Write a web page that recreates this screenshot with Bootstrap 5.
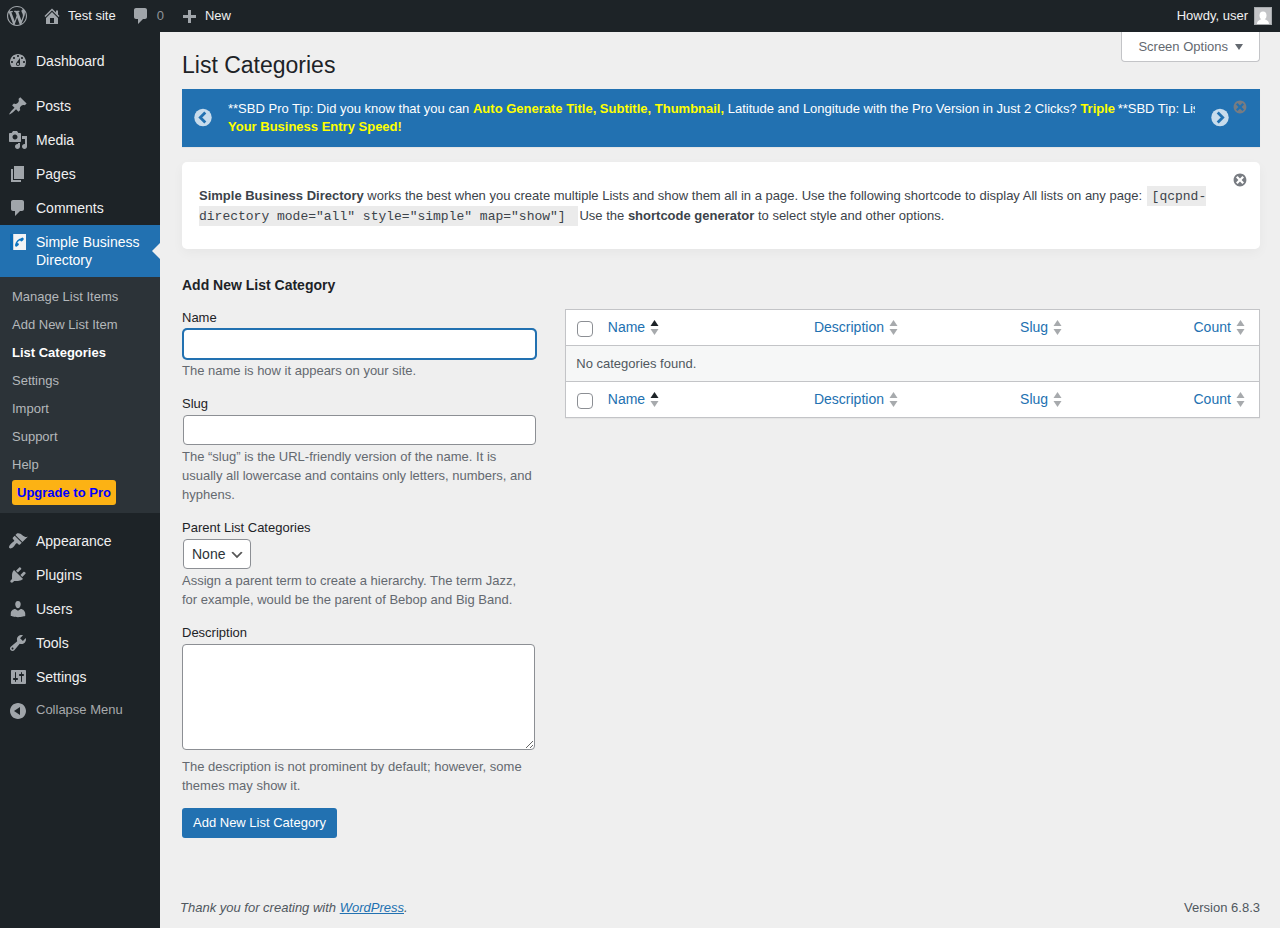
<!DOCTYPE html>
<html lang="en">
<head>
<meta charset="utf-8">
<meta name="viewport" content="width=device-width, initial-scale=1">
<title>List Categories ‹ Test site — WordPress</title>
<link href="https://cdn.jsdelivr.net/npm/bootstrap@5.3.0/dist/css/bootstrap.min.css" rel="stylesheet">
<style>
  :root { --page: #efefef; --ink: #1d2327; --blue: #2271b1; --line: #8c8f94; --icon: #a0a5aa; }
  body { font-family: "Liberation Sans", Arial, sans-serif; font-size: 13px; line-height: 19px; color: #3c434a; background: var(--page); }
  svg { display: block; flex: none; fill: currentColor; }
  .ico { width: 20px; height: 20px; color: var(--icon); }
  a { color: var(--blue); }

  /* Toolbar */
  .toolbar { height: 32px; background: var(--ink); }
  .toolbar a { color: #f0f0f1; text-decoration: none; gap: 6px; padding: 0 8px 0 7px; height: 32px; line-height: 18px; }
  .toolbar .quiet { color: #8f9499; }
  .avatar { width: 18px; height: 18px; border: 1px solid #a7aaad; background: #c3c4c7; color: #fff; }

  /* Side menu */
  .side { flex: 0 0 160px; background: var(--ink); padding-top: 12px; }
  .side-link { color: #f0f0f1; text-decoration: none; font-size: 14px; line-height: 18px; gap: 8px; padding: 8px; }
  .side-link .ico { margin: -1px 0; }
  .side-gap { height: 11px; }
  .side-link.current { position: relative; background: var(--blue); color: #fff; }
  .side-link.current::after { content: ""; position: absolute; right: 0; top: 50%; margin-top: -8px; border: 8px solid transparent; border-left-width: 0; border-right-color: var(--page); }
  .submenu { background: #2c3338; padding: 5px 12px 7px; }
  .submenu a { display: flex; align-items: center; height: 28px; color: #b4b8bb; text-decoration: none; }
  .submenu a.here { color: #fff; font-weight: 700; }
  .submenu .pro { background: #fcb214; color: #00f; font-weight: 700; border-radius: 3px; padding: 3px 5px; }
  .collapse-btn { border: 0; background: none; color: #a7aaad; gap: 8px; padding: 6px 8px; }

  /* Content */
  .content { min-width: 0; padding: 0 20px 11px; }
  .wrap-area { padding-left: 2px; }
  .screen-btn { border: 1px solid #c3c4c7; border-top: 0; border-radius: 0 0 4px 4px; background: #fff; color: #646970; height: 30px; padding: 0 16px; gap: 7px; }
  h1 { font-size: 23px; line-height: 30px; color: var(--ink); font-weight: 400; margin: 0 0 9px; padding-top: 18px; }
  .tips { background: var(--blue); color: #fff; line-height: 18px; padding: 11px 30px 11px 11px; gap: 15px; box-shadow: 0 1px 1px rgba(0,0,0,.04); }
  .tips b { color: #ff0; }
  .tips-view { min-width: 0; }
  .tip-slide { flex: 0 0 92%; }
  .plain-btn { border: 0; background: none; padding: 0; }
  .turn { color: #c8dcec; }
  .dismiss { position: absolute; top: 10px; right: 12px; color: #787c82; }
  .dismiss svg { width: 16px; height: 16px; }
  .info { margin-top: 15px; background: #fff; border-radius: 5px; padding: 24px 48px 23px 17px; line-height: 20px; box-shadow: 0 4px 12px rgba(0,0,0,.04); }
  .info code { font-family: "Liberation Mono", monospace; font-size: 13px; line-height: 16px; color: #3c434a; background: #ebebeb; padding: 3px 5px 2px; margin: 0 1px; word-wrap: normal; }
  h2 { font-size: 14px; line-height: 19px; font-weight: 700; color: var(--ink); margin: 0 0 13px; }
  .form-side { flex: 0 0 35%; padding-right: 24px; }
  .list-side { flex: 0 0 65%; padding: 33px 0 0 6px; }
  .panes { margin-top: 27px; }
  .field { margin-bottom: 14px; color: #646970; }
  .field:last-of-type { margin-bottom: 13px; }
  .field label { display: block; color: var(--ink); margin-bottom: 2px; }
  .field p { margin: 2px 2px 0 0; }
  .form-control, .form-select { border: 1px solid var(--line); border-radius: 4px; font-size: 14px; line-height: 28px; color: #2c3338; background-color: #fff; padding: 0 8px; }
  input.form-control, .form-select { height: 30px; margin: 0 1px; }
  .form-control.active-field { border-color: var(--blue); box-shadow: 0 0 0 1px var(--blue); }
  .form-select { width: auto; padding-right: 24px; background: #fff url("data:image/svg+xml,%3Csvg xmlns='http://www.w3.org/2000/svg' viewBox='0 0 20 20'%3E%3Cpath d='M5 6l5 5 5-5 2 1-7 7-7-7 2-1z' fill='%23555'/%3E%3C/svg%3E") no-repeat right 5px top 55% / 16px 16px; }
  textarea.form-control { height: 106px; margin-bottom: 7px; resize: vertical; }
  .btn-add { background: var(--blue); color: #fff; border: 0; border-radius: 3px; font-size: 13px; line-height: 30px; padding: 0 11px; }

  /* Category table */
  .cats { table-layout: fixed; border: 1px solid #c3c4c7; background: #fff; margin: 0; box-shadow: 0 1px 1px rgba(0,0,0,.04); }
  .cats th, .cats td { height: 36px; padding: 0 10px; vertical-align: middle; border: 0; border-bottom: 1px solid #c3c4c7; font-weight: 400; background: #fff; color: #50575e; }
  .cats tbody td { background: #f6f7f7; }
  .cats a { display: inline-flex; align-items: center; gap: 5px; font-size: 14px; text-decoration: none; }
  .cats svg { width: 9px; height: 16px; color: #a7aaad; }
  .cats .sorted path:first-child { fill: var(--ink); }
  .cats .tick { width: 32px; padding: 3px 0 0 11px; }
  .cats .form-check-input { display: block; width: 16px; height: 16px; margin: 0; border: 1px solid var(--line); border-radius: 4px; }
  .c-slug { width: 25%; }
  .c-count { width: 76px; }
  .page-foot { color: #50575e; }
</style>
</head>
<body>
<svg width="0" height="0" class="position-absolute" aria-hidden="true">
  <symbol id="i-wp" viewBox="0 0 20 20"><path d="M20 10c0-5.510-4.490-10-10-10C4.480 0 0 4.490 0 10c0 5.520 4.480 10 10 10 5.510 0 10-4.480 10-10zM7.780 15.370L4.370 6.220c.55-.02 1.170-.08 1.170-.08.5-.06.44-1.130-.06-1.110 0 0-1.450.11-2.370.11-.18 0-.37 0-.58-.01C4.120 2.690 6.870 1.110 10 1.110c2.330 0 4.450.87 6.050 2.340-.68-.11-1.650.39-1.650 1.580 0 .74.45 1.360.9 2.100.35.61.55 1.360.55 2.460 0 1.490-1.400 5-1.400 5l-3.030-8.370c.54-.02.82-.17.82-.17.5-.05.44-1.250-.06-1.220 0 0-1.440.12-2.380.12-.87 0-2.330-.12-2.330-.12-.5-.03-.56 1.200-.06 1.220l.92.08 1.260 3.410zM17.410 10c.24-.64.74-1.870.43-4.250.7 1.290 1.050 2.710 1.050 4.250 0 3.290-1.730 6.240-4.400 7.780.97-2.590 1.940-5.200 2.920-7.780zM6.100 18.090C3.120 16.650 1.110 13.530 1.110 10c0-1.300.23-2.480.72-3.590C3.250 10.300 4.670 14.200 6.100 18.090zm4.030-6.630l2.580 6.980c-.86.29-1.760.45-2.710.45-.79 0-1.570-.11-2.290-.33.81-2.380 1.620-4.740 2.420-7.100z"/></symbol>
  <symbol id="i-home" viewBox="0 0 20 20"><path d="M16 8.500l1.530 1.530-1.060 1.060L10 4.600l-6.470 6.490-1.060-1.060L10 2.500l4 4v-2h2v4zm-6-2.460l6 5.990V18H4v-5.970zM12 17v-5H8v5h4z"/></symbol>
  <symbol id="i-comment" viewBox="0 0 20 20"><path d="M5 2h9c1.100 0 2 .9 2 2v7c0 1.100-.9 2-2 2h-2l-5 5v-5H5c-1.100 0-2-.9-2-2V4c0-1.100.9-2 2-2z"/></symbol>
  <symbol id="i-plus" viewBox="0 0 20 20"><path d="M17 9v3h-5v5H9v-5H4V9h5V4h3v5h5z"/></symbol>
  <symbol id="i-x" viewBox="0 0 20 20"><path d="M10 2c4.420 0 8 3.580 8 8s-3.580 8-8 8-8-3.580-8-8 3.580-8 8-8zm5 11l-3-3 3-3-2-2-3 3-3-3-2 2 3 3-3 3 2 2 3-3 3 3z"/></symbol>
  <symbol id="i-sort" viewBox="0 0 9 16"><path d="M4.500 0L8.500 6h-8z"/><path d="M.5 9h8l-4 6z"/></symbol>
</svg>

<div class="min-vh-100 d-flex flex-column">
  <header class="toolbar d-flex align-items-center">
    <a href="#" class="d-flex align-items-center" aria-label="About WordPress"><svg class="ico"><use href="#i-wp"/></svg></a>
    <a href="#" class="d-flex align-items-center"><svg class="ico"><use href="#i-home"/></svg>Test site</a>
    <a href="#" class="d-flex align-items-center quiet"><svg class="ico"><use href="#i-comment"/></svg>0</a>
    <a href="#" class="d-flex align-items-center"><svg class="ico"><use href="#i-plus"/></svg>New</a>
    <a href="#" class="d-flex align-items-center ms-auto">Howdy, user
      <svg class="avatar" viewBox="0 0 16 16"><ellipse cx="8" cy="7.500" rx="3.500" ry="4"/><path d="M2 16c0-3 2.500-4 4.500-5h3c2 1 4.500 2 4.500 5z"/></svg></a>
  </header>

  <div class="d-flex flex-grow-1">
    <nav class="side" aria-label="Main menu">
      <a href="#" class="side-link d-flex"><svg class="ico" viewBox="0 0 20 20"><path fill-rule="evenodd" d="M3.760 16h12.480A7.980 7.980 0 0 0 18 11c0-4.420-3.580-8-8-8s-8 3.580-8 8c0 1.890.66 3.630 1.760 5zM10 4c.55 0 1 .45 1 1s-.45 1-1 1-1-.45-1-1 .45-1 1-1zM6 6c.55 0 1 .45 1 1s-.45 1-1 1-1-.45-1-1 .45-1 1-1zm8 0c.55 0 1 .45 1 1s-.45 1-1 1-1-.45-1-1 .45-1 1-1zm-5.370 5.550L12 7v6c0 1.100-.9 2-2 2s-2-.9-2-2c0-.57.24-1.080.63-1.450zM4 10c.55 0 1 .45 1 1s-.45 1-1 1-1-.45-1-1 .45-1 1-1zm12 0c.55 0 1 .45 1 1s-.45 1-1 1-1-.45-1-1 .45-1 1-1zm-5 3c0-.55-.45-1-1-1s-1 .45-1 1 .45 1 1 1 1-.45 1-1z"/></svg>Dashboard</a>
      <div class="side-gap"></div>
      <a href="#" class="side-link d-flex"><svg class="ico" viewBox="0 0 20 20"><path d="M10.440 3.020l1.820-1.820 6.360 6.350-1.830 1.820c-1.050-.68-2.480-.57-3.410.36l-.75.75c-.92.93-1.040 2.350-.35 3.410l-1.830 1.820-2.410-2.410-2.800 2.790c-.42.42-3.380 2.710-3.800 2.290s1.860-3.390 2.280-3.810l2.790-2.790L4.100 9.360l1.830-1.820c1.050.69 2.480.57 3.400-.36l.75-.75c.93-.92 1.050-2.350.36-3.410z"/></svg>Posts</a>
      <a href="#" class="side-link d-flex"><svg class="ico" viewBox="0 0 20 20"><path d="M13 11V4c0-.55-.45-1-1-1h-1.670L9 1H5L3.670 3H2c-.55 0-1 .45-1 1v7c0 .55.45 1 1 1h10c.55 0 1-.45 1-1zM7 4.500c1.380 0 2.500 1.120 2.500 2.500S8.380 9.500 7 9.500 4.500 8.380 4.500 7 5.620 4.500 7 4.500zM14 6h5v10.500c0 1.380-1.120 2.500-2.500 2.500S14 17.880 14 16.500s1.120-2.500 2.500-2.500c.17 0 .34.02.5.05V9h-3V6zm-4 8.050V13h2v3.500c0 1.380-1.120 2.500-2.500 2.500S7 17.880 7 16.500 8.120 14 9.500 14c.17 0 .34.02.5.05z"/></svg>Media</a>
      <a href="#" class="side-link d-flex"><svg class="ico" viewBox="0 0 20 20"><path d="M6 15V2h10v13H6zm-1 1h8v2H3V5h2v11z"/></svg>Pages</a>
      <a href="#" class="side-link d-flex"><svg class="ico"><use href="#i-comment"/></svg>Comments</a>
      <a href="#" class="side-link d-flex current"><svg class="ico" viewBox="0 0 20 20"><path fill="#0a6ab5" d="M2 2h4v16H2z"/><path fill="#f1f3f5" d="M5 2h13v16H5z"/><path fill="#c9d3dc" d="M5 2h1v16H5z"/><path fill="none" stroke="#0a73c0" stroke-width="1.500" d="M8 13.500C7.800 10 10.500 7 14.500 7"/><path fill="none" stroke="#0a73c0" stroke-width="2.600" stroke-linecap="round" d="M8.400 13.300l1.200-1M13.400 8l1-1"/></svg><span>Simple Business Directory</span></a>
      <div class="submenu">
        <a href="#">Manage List Items</a>
        <a href="#">Add New List Item</a>
        <a href="#" class="here" aria-current="page">List Categories</a>
        <a href="#">Settings</a>
        <a href="#">Import</a>
        <a href="#">Support</a>
        <a href="#">Help</a>
        <a href="#"><span class="pro">Upgrade to Pro</span></a>
      </div>
      <div class="side-gap"></div>
      <a href="#" class="side-link d-flex"><svg class="ico" viewBox="0 0 20 20"><path d="M14.480 11.060L7.410 3.990l1.500-1.500c.5-.56 2.300-.47 3.510.32 1.210.8 1.430 1.280 2.910 2.100 1.180.64 2.450 1.260 4.450.85zm-.71.71L6.700 4.700 4.930 6.470c-.39.39-.39 1.020 0 1.410l1.060 1.060c.39.39.39 1.030 0 1.420-.6.6-1.430 1.110-2.210 1.690-.35.26-.7.53-1.010.84C1.430 14.230.4 16.080 1.400 17.070c.99 1 2.840-.03 4.180-1.360.31-.31.58-.66.85-1.020.57-.78 1.080-1.610 1.690-2.210.39-.39 1.020-.39 1.410 0l1.060 1.060c.39.39 1.020.39 1.410 0z"/></svg>Appearance</a>
      <a href="#" class="side-link d-flex"><svg class="ico" viewBox="0 0 20 20"><path d="M13.110 4.360L9.870 7.600 8 5.730l3.240-3.240c.35-.34 1.050-.2 1.560.32.52.51.66 1.210.31 1.550zm-8 1.770l.91-1.120 9.010 9.010-1.190.84c-.71.71-2.630 1.160-3.820 1.160H6.140L4.900 17.260c-.59.59-1.540.59-2.120 0-.59-.58-.59-1.530 0-2.120l1.240-1.240v-3.880c0-1.130.4-3.190 1.090-3.890zm7.260 3.970l3.240-3.240c.34-.35 1.040-.21 1.550.31.52.51.66 1.210.31 1.550l-3.240 3.250z"/></svg>Plugins</a>
      <a href="#" class="side-link d-flex"><svg class="ico" viewBox="0 0 20 20"><path d="M10 9.250c-2.270 0-2.730-3.440-2.730-3.440C7 4.020 7.820 2 9.970 2c2.160 0 2.980 2.020 2.710 3.810 0 0-.41 3.440-2.680 3.440zm0 2.570L12.720 10c2.390 0 4.520 2.330 4.520 4.530v2.490s-3.650 1.130-7.240 1.130c-3.650 0-7.240-1.130-7.240-1.130v-2.490c0-2.250 1.940-4.480 4.470-4.480z"/></svg>Users</a>
      <a href="#" class="side-link d-flex"><svg class="ico" viewBox="0 0 20 20"><path d="M16.680 9.770c-1.340 1.340-3.300 1.670-4.950.99l-5.410 6.520c-.99.99-2.590.99-3.580 0s-.99-2.590 0-3.570l6.520-5.420c-.68-1.650-.35-3.610.99-4.950 1.280-1.280 3.120-1.620 4.720-1.060l-2.890 2.890 2.820 2.820 2.860-2.870c.53 1.580.18 3.390-1.080 4.650zM3.810 16.210c.4.39 1.040.39 1.430 0 .4-.4.4-1.040 0-1.430-.39-.4-1.030-.4-1.430 0-.39.39-.39 1.030 0 1.430z"/></svg>Tools</a>
      <a href="#" class="side-link d-flex"><svg class="ico" viewBox="0 0 20 20"><path fill-rule="evenodd" d="M18 16V4c0-.55-.45-1-1-1H4c-.55 0-1 .45-1 1v12c0 .55.45 1 1 1h13c.55 0 1-.45 1-1zM8 11h1c.55 0 1 .45 1 1s-.45 1-1 1H8v1.500c0 .28-.22.5-.5.5s-.5-.22-.5-.5V13H6c-.55 0-1-.45-1-1s.45-1 1-1h1V5.500c0-.28.22-.5.5-.5s.5.22.5.5V11zm5-2h-1c-.55 0-1-.45-1-1s.45-1 1-1h1V5.500c0-.28.22-.5.5-.5s.5.22.5.5V7h1c.55 0 1 .45 1 1s-.45 1-1 1h-1v5.500c0 .28-.22.5-.5.5s-.5-.22-.5-.5V9z"/></svg>Settings</a>
      <button type="button" class="collapse-btn d-flex"><svg class="ico" viewBox="0 0 20 20"><path d="M10 3c4.420 0 8 3.580 8 8s-3.580 8-8 8-8-3.580-8-8 3.580-8 8-8zm2 12V7l-6 4z"/></svg>Collapse Menu</button>
    </nav>

    <main class="content flex-grow-1 d-flex flex-column">
      <div class="wrap-area">
        <div class="d-flex justify-content-between align-items-start">
          <h1>List Categories</h1>
          <button type="button" class="screen-btn d-flex align-items-center">Screen Options <svg width="8" height="6" viewBox="0 0 8 6"><path d="M0 0h8L4 6z"/></svg></button>
        </div>

        <section class="tips d-flex align-items-center position-relative" aria-label="Tips">
          <button type="button" class="plain-btn turn" aria-label="Previous tip"><svg width="20" height="20" viewBox="0 0 20 20"><circle cx="10" cy="9.500" r="8.700"/><path d="M12.300 4.500l-5 5 5 5" fill="none" stroke="#2271b1" stroke-width="2.800"/></svg></button>
          <div class="tips-view flex-grow-1 d-flex overflow-hidden">
            <div class="tip-slide">**SBD Pro Tip: Did you know that you can <b>Auto Generate Title, Subtitle, Thumbnail,</b> Latitude and Longitude with the Pro Version in Just 2 Clicks? <b>Triple Your Business Entry Speed!</b></div>
            <div class="tip-slide text-nowrap">**SBD Tip: List</div>
          </div>
          <button type="button" class="plain-btn turn" aria-label="Next tip"><svg width="20" height="20" viewBox="0 0 20 20"><circle cx="10" cy="9.500" r="8.700"/><path d="M7.700 4.500l5 5-5 5" fill="none" stroke="#2271b1" stroke-width="2.800"/></svg></button>
          <button type="button" class="plain-btn dismiss" aria-label="Dismiss tips"><svg><use href="#i-x"/></svg></button>
        </section>

        <section class="info position-relative">
          <b>Simple Business Directory</b> works the best when you create multiple Lists and show them all in a page. Use the following shortcode to display All lists on any page: <code>[qcpnd-directory mode="all" style="simple" map="show"]&nbsp;</code>Use the <b>shortcode generator</b> to select style and other options.
          <button type="button" class="plain-btn dismiss" aria-label="Dismiss notice"><svg><use href="#i-x"/></svg></button>
        </section>

        <div class="panes d-flex">
          <form class="form-side">
            <h2>Add New List Category</h2>
            <div class="field">
              <label for="name">Name</label>
              <input id="name" type="text" class="form-control active-field">
              <p>The name is how it appears on your site.</p>
            </div>
            <div class="field">
              <label for="slug">Slug</label>
              <input id="slug" type="text" class="form-control">
              <p>The “slug” is the URL-friendly version of the name. It is usually all lowercase and contains only letters, numbers, and hyphens.</p>
            </div>
            <div class="field">
              <label for="parent">Parent List Categories</label>
              <select id="parent" class="form-select"><option>None</option></select>
              <p>Assign a parent term to create a hierarchy. The term Jazz, for example, would be the parent of Bebop and Big Band.</p>
            </div>
            <div class="field">
              <label for="description">Description</label>
              <textarea id="description" class="form-control"></textarea>
              <p>The description is not prominent by default; however, some themes may show it.</p>
            </div>
            <button type="button" class="btn btn-add">Add New List Category</button>
          </form>

          <div class="list-side">
            <table class="table cats">
              <thead>
                <tr>
                  <td class="tick"><input type="checkbox" class="form-check-input" aria-label="Select all"></td>
                  <th scope="col"><a href="#" class="sorted">Name<svg viewBox="0 0 9 16"><path d="M4.500 0L8.500 6h-8z"/><path d="M.5 9h8l-4 6z"/></svg></a></th>
                  <th scope="col"><a href="#">Description<svg><use href="#i-sort"/></svg></a></th>
                  <th scope="col" class="c-slug"><a href="#">Slug<svg><use href="#i-sort"/></svg></a></th>
                  <th scope="col" class="c-count"><a href="#">Count<svg><use href="#i-sort"/></svg></a></th>
                </tr>
              </thead>
              <tbody>
                <tr><td colspan="5">No categories found.</td></tr>
              </tbody>
              <tfoot>
                <tr>
                  <td class="tick"><input type="checkbox" class="form-check-input" aria-label="Select all"></td>
                  <th scope="col"><a href="#" class="sorted">Name<svg viewBox="0 0 9 16"><path d="M4.500 0L8.500 6h-8z"/><path d="M.5 9h8l-4 6z"/></svg></a></th>
                  <th scope="col"><a href="#">Description<svg><use href="#i-sort"/></svg></a></th>
                  <th scope="col"><a href="#">Slug<svg><use href="#i-sort"/></svg></a></th>
                  <th scope="col"><a href="#">Count<svg><use href="#i-sort"/></svg></a></th>
                </tr>
              </tfoot>
            </table>
          </div>
        </div>
      </div>

      <footer class="page-foot d-flex justify-content-between mt-auto pt-4">
        <em>Thank you for creating with <a href="#">WordPress</a>.</em>
        <span>Version 6.8.3</span>
      </footer>
    </main>
  </div>
</div>
<script src="https://cdn.jsdelivr.net/npm/bootstrap@5.3.0/dist/js/bootstrap.bundle.min.js"></script>
</body>
</html>
